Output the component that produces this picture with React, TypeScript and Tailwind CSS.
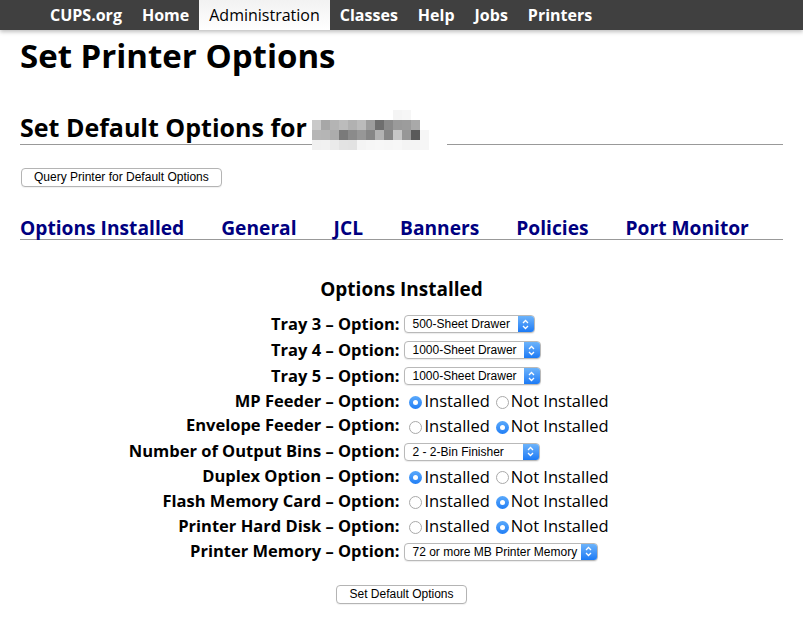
import { useState } from 'react';

const navItems = ['CUPS.org', 'Home', 'Administration', 'Classes', 'Help', 'Jobs', 'Printers'];
const tabs = ['Options Installed', 'General', 'JCL', 'Banners', 'Policies', 'Port Monitor'];

type Row =
  | { label: string; kind: 'select'; value: string; width: string }
  | { label: string; kind: 'radio'; installed: boolean };

const rows: Row[] = [
  { label: 'Tray 3', kind: 'select', value: '500-Sheet Drawer', width: 'w-[131px]' },
  { label: 'Tray 4', kind: 'select', value: '1000-Sheet Drawer', width: 'w-[137px]' },
  { label: 'Tray 5', kind: 'select', value: '1000-Sheet Drawer', width: 'w-[137px]' },
  { label: 'MP Feeder', kind: 'radio', installed: true },
  { label: 'Envelope Feeder', kind: 'radio', installed: false },
  { label: 'Number of Output Bins', kind: 'select', value: '2 - 2-Bin Finisher', width: 'w-[136px]' },
  { label: 'Duplex Option', kind: 'radio', installed: true },
  { label: 'Flash Memory Card', kind: 'radio', installed: false },
  { label: 'Printer Hard Disk', kind: 'radio', installed: false },
  { label: 'Printer Memory', kind: 'select', value: '72 or more MB Printer Memory', width: 'w-[194px]' },
];

// pixelated printer name
const mosaic = [
  ['#fff', '#fff', '#fff', '#fff', '#fff', '#fff', '#fff', '#fff', '#fff', '#f4f4f4', '#f6f6f6', '#fff', '#fff', '#fff', '#fff'],
  ['#c9c9c9', '#a7a7a7', '#b4b4b4', '#bcbcbc', '#b1b1b1', '#bbbbbb', '#9d9d9d', '#6e6e6e', '#8a8a8a', '#9a9a9a', '#9c9c9c', '#a9a9a9', '#fff', '#fff', '#fff'],
  ['#b6b6b6', '#b5b5b5', '#acacac', '#7a7a7a', '#8b8b8b', '#979797', '#868686', '#b2b2b2', '#868686', '#c6c6c6', '#979797', '#5a5a5a', '#f6f6f6', '#fff', '#fff'],
  ['#f0f0f0', '#f1f1f1', '#eaeaea', '#e3e3e3', '#e2e2e2', '#f4f4f4', '#f6f6f6', '#f7f7f7', '#f6f6f6', '#f7f7f7', '#f4f4f4', '#f4f4f4', '#f6f6f6', '#fff', '#fff'],
];

function Select({ value, width }: { value: string; width: string }) {
  return (
    <div
      className={`flex h-[18px] ${width} items-stretch overflow-hidden rounded-[4px] border border-[#b9b9b9] bg-white font-['Liberation_Sans',sans-serif] shadow-[0_1px_1px_rgba(0,0,0,0.08)]`}
    >
      <span className="min-w-0 flex-1 overflow-hidden whitespace-nowrap pl-[8px] text-[12px] leading-[16px] text-black">
        {value}
      </span>
      <span className="flex w-[16px] shrink-0 items-center justify-center bg-gradient-to-b from-[#6cb3fa] to-[#1a7af5]">
        <svg width="7" height="11" viewBox="0 0 7 11" fill="none" stroke="white" strokeWidth="1.3">
          <path d="M1 4 L3.5 1.5 L6 4" />
          <path d="M1 7 L3.5 9.5 L6 7" />
        </svg>
      </span>
    </div>
  );
}

function Radio({ checked }: { checked: boolean }) {
  return checked ? (
    <span className="mt-[2px] flex h-[13px] w-[13px] items-center justify-center rounded-full bg-gradient-to-b from-[#5aa9fb] to-[#1f7ef5]">
      <span className="h-[5px] w-[5px] rounded-full bg-white" />
    </span>
  ) : (
    <span className="mt-[2px] h-[13px] w-[13px] rounded-full border border-[#a9a9a9] bg-white" />
  );
}

function Button({ children }: { children: string }) {
  return (
    <button
      type="button"
      className="h-[19px] rounded-[4px] border border-[#b4b4b4] bg-white px-[12px] font-['Liberation_Sans',sans-serif] text-[12px] leading-[17px] text-black shadow-[0_1px_1px_rgba(0,0,0,0.06)]"
    >
      {children}
    </button>
  );
}

export default function App() {
  const [active] = useState('Administration');

  return (
    <div className="min-h-[618px] w-[803px] bg-white font-['Open_Sans',sans-serif] text-black">
      <div className="flex h-[30px] items-stretch bg-[#404040] pl-[40px] shadow-[0_2px_4px_rgba(0,0,0,0.25)]">
        {navItems.map((n) =>
          n === active ? (
            <span
              key={n}
              className="flex items-center bg-gradient-to-b from-[#f2f2f2] to-white px-[10px] text-[16px] text-black"
            >
              {n}
            </span>
          ) : (
            <span key={n} className="flex items-center px-[10px] text-[16px] font-bold text-white">
              {n}
            </span>
          ),
        )}
      </div>

      <div className="px-5">
        <h1 className="mt-[7px] text-[33px] font-bold leading-[38px]">Set Printer Options</h1>

        {/* heading rule is split so the blurred name can sit over it */}
        <div className="mt-[35px] flex h-[35px] items-start">
          <h2 className="h-[35px] shrink-0 border-b border-[#999] pt-[2px] text-[25px] font-bold leading-[30px]">
            Set Default Options for
          </h2>
          <div className="h-[35px] w-[5px] shrink-0 border-b border-[#999]" />
          <div className="relative z-10 grid h-[40px] shrink-0 grid-cols-[repeat(15,9px)] grid-rows-[repeat(4,10px)]">
            {mosaic.flat().map((c, i) => (
              <span key={i} style={{ backgroundColor: c }} />
            ))}
          </div>
          <div className="h-[35px] flex-1 border-b border-[#999]" />
        </div>

        <div className="mt-[23px] flex pl-[1px]">
          <Button>Query Printer for Default Options</Button>
        </div>

        <div className="mt-[31px] flex gap-[37px] whitespace-nowrap border-b border-[#999] pb-[1px]">
          {tabs.map((t) => (
            <a key={t} className="text-[19.2px] font-bold leading-[20px] text-[#000080]">
              {t}
            </a>
          ))}
        </div>

        <h3 className="mt-[38px] text-center text-[19px] font-bold leading-[22px]">Options Installed</h3>

        <div className="mt-[11px] grid grid-cols-2 gap-x-[4px]">
          {rows.map((r) => (
            <div key={r.label} className="contents">
              <div
                className={`flex items-center justify-end whitespace-nowrap text-[16.5px] font-bold ${r.kind === 'select' ? 'h-[26px]' : 'h-[24px]'}`}
              >
                {r.label} – Option:
              </div>
              <div className="flex items-center text-[16.5px]">
                {r.kind === 'select' ? (
                  <Select value={r.value} width={r.width} />
                ) : (
                  <div className="flex items-center whitespace-nowrap">
                    <span className="ml-[5px] mr-[3px] flex">
                      <Radio checked={r.installed} />
                    </span>
                    <span>Installed</span>
                    <span className="ml-[6px] mr-[2px] flex">
                      <Radio checked={!r.installed} />
                    </span>
                    <span>Not Installed</span>
                  </div>
                )}
              </div>
            </div>
          ))}
        </div>

        <div className="mt-[20px] flex justify-center">
          <Button>Set Default Options</Button>
        </div>
      </div>
    </div>
  );
}
